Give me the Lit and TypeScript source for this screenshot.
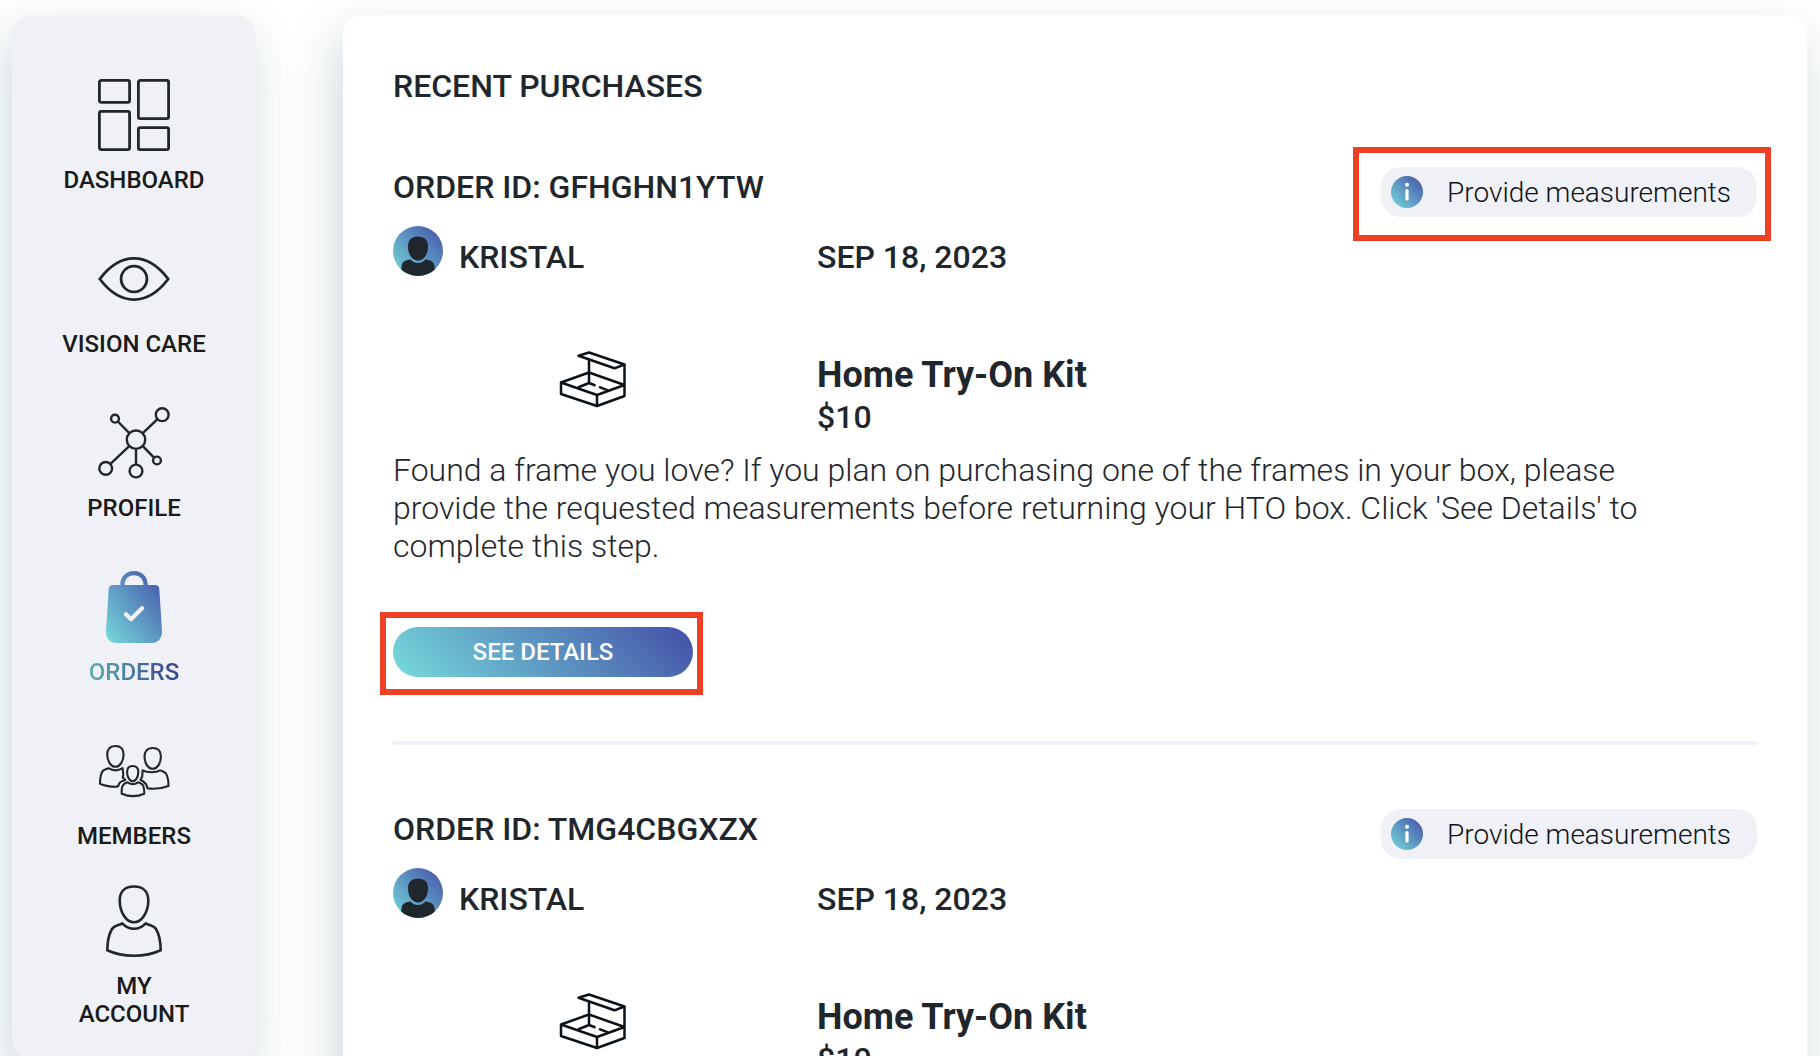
import { LitElement, html, css, svg, nothing } from "lit";
import { customElement, property } from "lit/decorators.js";

type IconName = "dashboard" | "vision" | "profile" | "orders" | "members" | "account";

interface NavEntry {
  icon: IconName;
  lines: string[];
  href: string;
  active?: boolean;
}

interface Order {
  id: string;
  customer: string;
  date: string;
  product: string;
  price: string;
  note: string;
  status: string;
  marked: boolean;
}

const NAV: NavEntry[] = [
  { icon: "dashboard", lines: ["DASHBOARD"], href: "#dashboard" },
  { icon: "vision", lines: ["VISION CARE"], href: "#vision-care" },
  { icon: "profile", lines: ["PROFILE"], href: "#profile" },
  { icon: "orders", lines: ["ORDERS"], href: "#orders", active: true },
  { icon: "members", lines: ["MEMBERS"], href: "#members" },
  { icon: "account", lines: ["MY", "ACCOUNT"], href: "#account" },
];

const NOTE =
  "Found a frame you love? If you plan on purchasing one of the frames in your box, please provide the requested measurements before returning your HTO box. Click 'See Details' to complete this step.";

const ORDERS: Order[] = ["GFHGHN1YTW", "TMG4CBGXZX"].map((id, index) => ({
  id,
  customer: "KRISTAL",
  date: "SEP 18, 2023",
  product: "Home Try-On Kit",
  price: "$10",
  note: NOTE,
  status: "Provide measurements",
  marked: index === 0,
}));

const gradient = (id: string) => svg`
  <linearGradient id=${id} x1="0" y1="1" x2="1" y2="0">
    <stop offset="0" stop-color="#76dbdb"></stop>
    <stop offset="1" stop-color="#444fa8"></stop>
  </linearGradient>`;

const ICONS = {
  dashboard: svg`
    <g stroke-width="2.8">
      <rect x="1.4" y="1.4" width="30.2" height="22" rx="1.8"></rect>
      <rect x="1.4" y="32.4" width="30.2" height="38.2" rx="1.8"></rect>
      <rect x="40.4" y="1.4" width="30.2" height="38.2" rx="1.8"></rect>
      <rect x="40.4" y="48.6" width="30.2" height="22" rx="1.8"></rect>
    </g>`,
  vision: svg`
    <path stroke-width="2.8" d="M1.8 36C12 22.500 24 15.400 36 15.400S60 22.500 70.200 36C60 49.500 48 56.600 36 56.600S12 49.500 1.800 36Z"></path>
    <circle stroke-width="2.8" cx="36" cy="36" r="12.900"></circle>`,
  profile: svg`
    <g stroke-width="2.4">
      <circle cx="38" cy="32.700" r="9.200"></circle>
      <circle cx="64.200" cy="7.700" r="6.400"></circle>
      <circle cx="17" cy="11.700" r="3.900"></circle>
      <circle cx="7.700" cy="61.400" r="6.400"></circle>
      <circle cx="38" cy="64" r="6.400"></circle>
      <circle cx="59" cy="53.500" r="3.900"></circle>
      <path d="M44.800 26.200L59.500 12.200M31.300 26.200L19.900 14.500M31.300 39.200L12.400 56.900M38 42V57.600M44.800 39.200L56 50.700"></path>
    </g>`,
  orders: svg`
    <defs>${gradient("bag")}</defs>
    <g stroke="none" fill="url(#bag)">
      <path d="M22.300 14C22.300 5 28.500 0 36 0S49.700 5 49.700 14H57Q61 14 61.300 18L64 60C64.300 67 60 72 54 72H18C12 72 7.700 67 8 60L10.700 18Q11 14 15 14ZM26.600 14H45.400C45.400 8 41.500 4.300 36 4.300S26.600 8 26.600 14Z" fill-rule="evenodd"></path>
    </g>
    <path stroke="#f0f1f6" stroke-width="4.200" stroke-linecap="round" stroke-linejoin="round" d="M28 43.300L33 48.300L44 37.200"></path>`,
  members: svg`
    <g stroke-width="2.100" stroke-linejoin="round">
      <path d="M17.400 11C23 11 25.600 14.500 25.600 19.500C25.600 26 22 31.800 17.400 31.800S9.200 26 9.200 19.500C9.200 14.500 11.800 11 17.400 11Z"></path>
      <path d="M54.700 13C60.300 13 62.900 16.500 62.900 21.500C62.900 28 59.300 33.800 54.700 33.800S46.500 28 46.500 21.500C46.500 16.500 49.100 13 54.700 13Z"></path>
      <path d="M34.700 31C38.800 31 40.300 33.500 40.300 37C40.300 41.500 38 46.300 34.700 46.300S29.100 41.500 29.100 37C29.100 33.500 30.600 31 34.700 31Z"></path>
      <path d="M10.500 33.200C15 36 20 36 24.600 33.200L25.300 39.500L24.800 42.500L27.300 45C23.500 46 21.300 47.500 20.800 49.500Q20.300 52 17.500 51.800Q8 51.500 2 48.700C2 43 3 38 5 35.800C6.500 34.200 8.500 34.200 10.500 33.200Z"></path>
      <path d="M44.600 35.400C49 37.900 58 37.900 62.300 35.400C64.300 36.300 66.300 36.500 67.900 38.500C69.800 41.500 70.500 46 70.500 51Q60.500 54.800 49.500 53.400Q48.500 47.500 42.500 44.800L44.200 41.500Z"></path>
      <path d="M29.500 47.300C33 49.500 37 49.500 40 47.300C43 48 44.500 48.800 45.300 51Q46.300 54 46.300 58.700Q35 63.600 23.700 58.700Q23.500 53 24.800 50.500C25.800 48.700 27.500 48 29.500 47.300Z"></path>
    </g>`,
  account: svg`
    <g stroke-width="2.600" stroke-linejoin="round">
      <path d="M36 1.500C45.500 1.500 50.300 7 50.300 15.500C50.300 27 43.800 37.300 36 37.300S21.700 27 21.700 15.500C21.700 7 26.500 1.500 36 1.500Z"></path>
      <path d="M24.300 38.300C28 42.300 32 43.700 36 43.700S44 42.300 47.700 38.300C51 40.500 55.500 40 58 44C61.300 49.500 62.600 57 62.700 65.200C54 69.300 45 70.700 36 70.700S18 69.300 9.300 65.200C9.400 57 10.700 49.500 14 44C16.500 40 21 40.500 24.300 38.300Z"></path>
    </g>`,
};

@customElement("nav-item")
class NavItem extends LitElement {
  @property({ attribute: false }) entry!: NavEntry;

  static styles = css`
    :host {
      display: block;
    }
    .link {
      display: flex;
      flex-direction: column;
      align-items: center;
      justify-content: center;
      gap: 15px;
      min-height: 165px;
      margin-bottom: -1px;
      color: #1a1a1a;
      font-size: 24px;
      font-weight: 500;
      line-height: 28px;
      text-align: center;
      text-decoration: none;
    }
    .icon {
      width: 72px;
      height: 72px;
      fill: none;
      stroke: #1f272d;
    }
    .line {
      display: block;
    }
    .active .label {
      color: transparent;
      background: linear-gradient(90deg, #5bb0b2, #36408f);
      background-clip: text;
      -webkit-background-clip: text;
    }
  `;

  render() {
    const { icon, lines, href, active } = this.entry;
    return html`
      <a class="link ${active ? "active" : ""}" href=${href} aria-current=${active ? "page" : nothing}>
        <svg class="icon" viewBox="0 0 72 72" aria-hidden="true">${ICONS[icon]}</svg>
        <span class="label">${lines.map((line) => html`<span class="line">${line}</span>`)}</span>
      </a>
    `;
  }
}

@customElement("order-entry")
class OrderEntry extends LitElement {
  @property({ attribute: false }) order!: Order;

  static styles = css`
    :host {
      display: block;
    }
    .order {
      padding-bottom: 64px;
      border-bottom: 4px solid #f0f1f6;
    }
    .head {
      display: flex;
      justify-content: space-between;
      align-items: flex-start;
      height: 50px;
    }
    .order-id {
      margin: 0;
      font-size: 32px;
      font-weight: 500;
      line-height: 40px;
    }
    .marker {
      position: relative;
      display: inline-flex;
    }
    .marked::after {
      content: "";
      position: absolute;
      border: 6px solid #ee4025;
      pointer-events: none;
    }
    .marked.status::after {
      inset: -20px -14px -24px -28px;
    }
    .marked.action::after {
      inset: -15px -10px -18px -13px;
    }
    .pill {
      display: flex;
      align-items: center;
      gap: 24px;
      height: 50px;
      padding: 0 26px 0 10px;
      border-radius: 20px;
      background: #f0f1f6;
      color: #0b1319;
      font-size: 28px;
      font-weight: 300;
      text-decoration: none;
    }
    .info {
      width: 32px;
      height: 32px;
    }
    .columns {
      display: grid;
      grid-template-columns: 400px 1fr;
      column-gap: 24px;
    }
    .who {
      align-items: end;
      margin-top: 9px;
      font-size: 32px;
      font-weight: 500;
      line-height: 38px;
    }
    .customer {
      display: flex;
      align-items: end;
      gap: 16px;
    }
    .avatar {
      width: 50px;
      height: 50px;
    }
    .item {
      margin-top: 75px;
    }
    .kit {
      justify-self: center;
      width: 68px;
      height: 58px;
    }
    .product {
      margin: 0;
      font-size: 36px;
      font-weight: 700;
      line-height: 48px;
    }
    .price {
      margin: 0;
      font-size: 32px;
      font-weight: 500;
      line-height: 36px;
    }
    .note {
      margin: 16px 0 62px;
      padding-right: 40px;
      font-size: 32px;
      font-weight: 300;
      line-height: 38px;
    }
    .details {
      width: 300px;
      height: 50px;
      padding: 0;
      border: 0;
      border-radius: 25px;
      background: linear-gradient(45deg, #76dbdb, #444fa8);
      color: #ffffff;
      font: inherit;
      font-size: 24px;
      font-weight: 500;
      cursor: pointer;
    }
  `;

  render() {
    const o = this.order;
    const mark = o.marked ? "marked" : "";
    return html`
      <article class="order">
        <div class="head">
          <h2 class="order-id">ORDER ID: ${o.id}</h2>
          <span class="marker status ${mark}">
            <a class="pill" href="#measurements">
              <svg class="info" viewBox="0 0 32 32" aria-hidden="true">
                <defs>${gradient("info")}</defs>
                <circle cx="16" cy="16" r="16" fill="url(#info)"></circle>
                <circle cx="16" cy="8.800" r="2" fill="#ffffff"></circle>
                <path d="M16 14.500V23" stroke="#ffffff" stroke-width="3.200" stroke-linecap="round"></path>
              </svg>
              ${o.status}
            </a>
          </span>
        </div>
        <div class="columns who">
          <div class="customer">
            <svg class="avatar" viewBox="0 0 50 50" aria-hidden="true">
              <defs>
                ${gradient("avatar")}
                <clipPath id="disc"><circle cx="25" cy="25" r="25"></circle></clipPath>
              </defs>
              <circle cx="25" cy="25" r="25" fill="url(#avatar)"></circle>
              <g fill="#1f272d" clip-path="url(#disc)">
                <path d="M25 10.500C31.500 10.500 35 14 35 20.500C35 28 31 34.500 25 34.500S15 28 15 20.500C15 14 18.500 10.500 25 10.500Z"></path>
                <path d="M17.500 33.500C22 38.300 28 38.300 32.500 33.500C37 34.300 39.500 34.800 41 38Q42 41 42 50H8Q8 41 9 38C10.500 34.800 13 34.300 17.500 33.500Z"></path>
              </g>
            </svg>
            <span>${o.customer}</span>
          </div>
          <time datetime="2023-09-18">${o.date}</time>
        </div>
        <div class="columns item">
          <svg class="kit" viewBox="0 0 68 58" aria-hidden="true">
            <g fill="none" stroke="#0b1319" stroke-width="2.500" stroke-linejoin="round">
              <path d="M19.500 4.800L30 1.500L65.500 13.500L55.500 17.300Z"></path>
              <path d="M65.500 13.500V45L38 55L2 43V31.500L30 21.500L65.500 34L38 44L2 31.500M38 44V55"></path>
              <path d="M30 9V32L19 36.500M30 32L36.500 34.500M40 35.900L49 39.300"></path>
            </g>
          </svg>
          <div>
            <h3 class="product">${o.product}</h3>
            <p class="price">${o.price}</p>
          </div>
        </div>
        <p class="note">${o.note}</p>
        <span class="marker action ${mark}">
          <button class="details" type="button">SEE DETAILS</button>
        </span>
      </article>
    `;
  }
}

@customElement("app-root")
class AppRoot extends LitElement {
  static styles = css`
    :host {
      display: block;
      height: 100vh;
      overflow-y: auto;
      scrollbar-width: none;
      background: #ffffff;
      color: #1f272d;
      font-family: Roboto, "Liberation Sans", sans-serif;
    }
    .page {
      display: grid;
      grid-template-columns: 244px minmax(0, 1fr);
      column-gap: 87px;
      align-items: start;
      padding: 15px 13px 40px 12px;
      overflow: hidden;
    }
    .sidebar,
    .panel {
      border-radius: 20px;
      box-shadow: -6px 20px 50px rgba(30, 80, 100, 0.22);
    }
    .sidebar {
      padding: 39px 0 22px;
      background: #f0f1f6;
    }
    .panel {
      padding: 52px 50px 64px;
      background: #ffffff;
    }
    .title {
      margin: 0 0 62px;
      font-size: 32px;
      font-weight: 500;
      line-height: 38px;
    }
    .orders {
      display: flex;
      flex-direction: column;
      gap: 64px;
    }
  `;

  render() {
    return html`
      <div class="page">
        <nav class="sidebar" aria-label="Account">
          ${NAV.map((entry) => html`<nav-item .entry=${entry}></nav-item>`)}
        </nav>
        <main class="panel">
          <h1 class="title">RECENT PURCHASES</h1>
          <div class="orders">
            ${ORDERS.map((order) => html`<order-entry .order=${order}></order-entry>`)}
          </div>
        </main>
      </div>
    `;
  }
}
